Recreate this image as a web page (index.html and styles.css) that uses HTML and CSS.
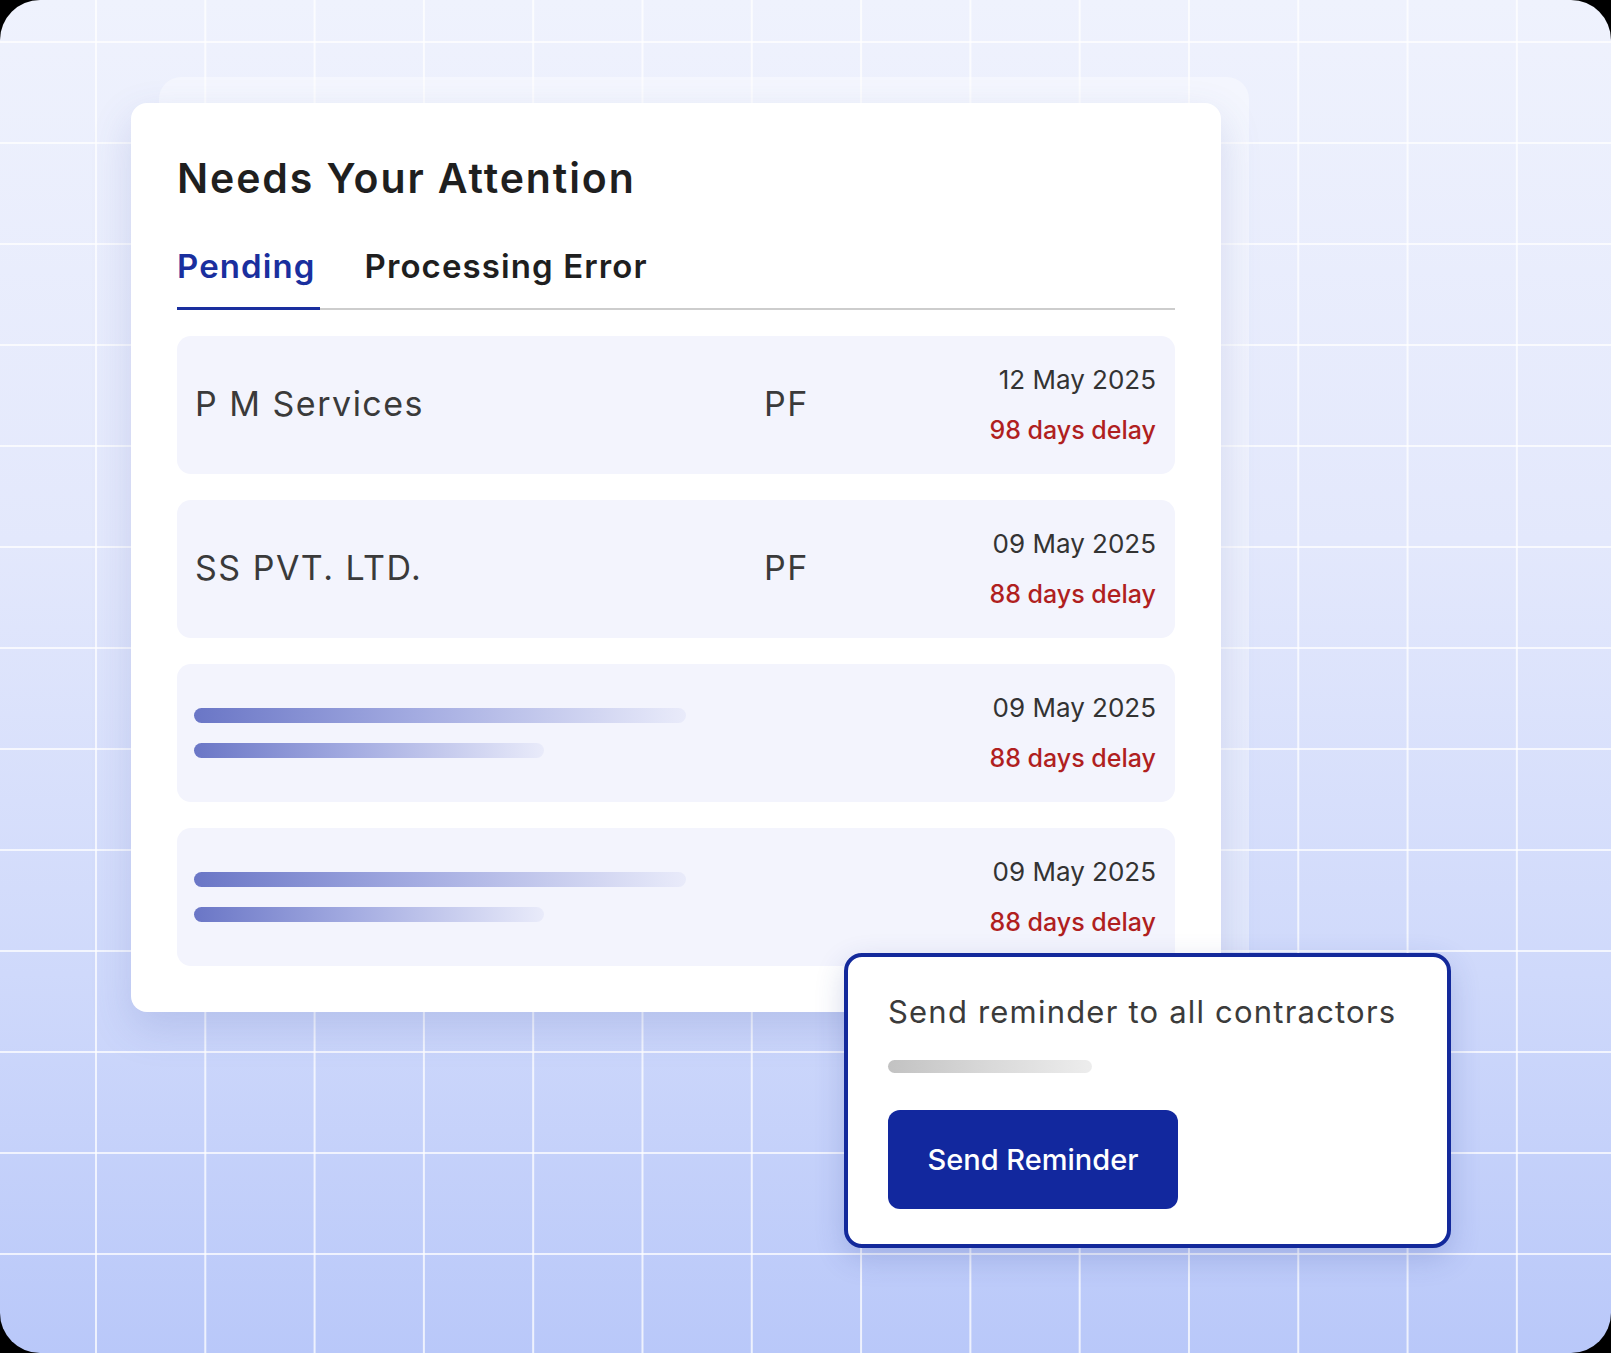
FILE: index.html
```html
<!DOCTYPE html>
<html lang="en">
<head>
    <meta charset="UTF-8">
    <meta name="viewport" content="width=device-width, initial-scale=1.0">
    <title>Needs Your Attention</title>
    <link rel="stylesheet" href="styles.css">
</head>
<body>
    <div class="frame">
        <div class="back-card"></div>

        <div class="card">
            <h1 class="card-title">Needs Your Attention</h1>

            <div class="tabs">
                <button class="tab active">Pending</button>
                <button class="tab">Processing Error</button>
            </div>

            <div class="list">
                <div class="row">
                    <div class="name">P M Services</div>
                    <div class="type">PF</div>
                    <div class="when">
                        <div class="date">12 May 2025</div>
                        <div class="delay">98 days delay</div>
                    </div>
                </div>

                <div class="row">
                    <div class="name">SS PVT. LTD.</div>
                    <div class="type">PF</div>
                    <div class="when">
                        <div class="date">09 May 2025</div>
                        <div class="delay">88 days delay</div>
                    </div>
                </div>

                <div class="row">
                    <div class="skeleton">
                        <div class="bar bar-long"></div>
                        <div class="bar bar-short"></div>
                    </div>
                    <div class="type"></div>
                    <div class="when">
                        <div class="date">09 May 2025</div>
                        <div class="delay">88 days delay</div>
                    </div>
                </div>

                <div class="row">
                    <div class="skeleton">
                        <div class="bar bar-long"></div>
                        <div class="bar bar-short"></div>
                    </div>
                    <div class="type"></div>
                    <div class="when">
                        <div class="date">09 May 2025</div>
                        <div class="delay">88 days delay</div>
                    </div>
                </div>
            </div>
        </div>

        <div class="reminder">
            <p class="reminder-text">Send reminder to all contractors</p>
            <div class="reminder-bar"></div>
            <button class="send-button">Send Reminder</button>
        </div>
    </div>
</body>
</html>
```

FILE: styles.css
```css
* {
    margin: 0;
    padding: 0;
    box-sizing: border-box;
}

body {
    font-family: Inter, "Noto Sans", Arial, sans-serif;
    background-color: #000;
    overflow: hidden;
}

.frame {
    position: relative;
    width: 1611px;
    height: 1353px;
    border-radius: 40px;
    overflow: hidden;
    padding: 103px 0 0 131px;
    background-color: #dfe5fb;
    background-image:
        linear-gradient(rgba(255, 255, 255, 0.75) 2px, transparent 2px),
        linear-gradient(90deg, rgba(255, 255, 255, 0.75) 2px, transparent 2px),
        linear-gradient(180deg, #eff2fd 0%, #e3e8fc 40%, #cfd9fb 72%, #b9c8f9 100%);
    background-size: 109.3px 101px, 109.3px 101px, 100% 100%;
    background-position: 0 41px, 95px 0, 0 0;
}

.back-card {
    position: absolute;
    left: 159px;
    top: 77px;
    width: 1090px;
    height: 934px;
    border-radius: 22px;
    background-color: rgba(255, 255, 255, 0.38);
}

.card {
    position: relative;
    z-index: 1;
    width: 1090px;
    padding: 51px 46px 46px;
    background-color: #fff;
    border-radius: 16px;
    box-shadow: 0 16px 40px rgba(70, 90, 170, 0.18);
}

.card-title {
    font-size: 41px;
    font-weight: 600;
    line-height: 1.2;
    color: #1f1f1f;
    letter-spacing: 1.9px;
}

.tabs {
    display: flex;
    gap: 45px;
    margin-top: 44px;
    border-bottom: 2px solid #cdcdcd;
}

.tab {
    font-family: inherit;
    font-size: 33px;
    font-weight: 600;
    line-height: 1.2;
    letter-spacing: 1.1px;
    color: #1f1f1f;
    background: none;
    border: none;
    border-bottom: 3px solid transparent;
    margin-bottom: -2px;
    padding: 0 4px 20px 0;
    cursor: pointer;
}

.tab.active {
    color: #1a2f9e;
    border-bottom-color: #1a2f9e;
}

.list {
    display: flex;
    flex-direction: column;
    gap: 26px;
    margin-top: 26px;
}

.row {
    display: grid;
    grid-template-columns: 569px 1fr auto;
    align-items: center;
    height: 138px;
    padding: 0 19px 0 18px;
    background-color: #f3f4fd;
    border-radius: 14px;
}

.name,
.type {
    font-size: 34px;
    color: #3a3a3a;
    line-height: 1.2;
    letter-spacing: 1.5px;
}

.when {
    text-align: right;
}

.date {
    font-size: 26px;
    line-height: 50px;
    color: #333;
}

.delay {
    font-size: 25px;
    font-weight: 500;
    line-height: 50px;
    color: #b01f1f;
}

.skeleton {
    display: flex;
    flex-direction: column;
    gap: 20px;
    margin-left: -1px;
}

.bar {
    height: 15px;
    border-radius: 8px;
    background: linear-gradient(90deg, #6a76c6 0%, #a3abe1 45%, #e9ebfa 100%);
}

.bar-long {
    width: 492px;
}

.bar-short {
    width: 350px;
}

.reminder {
    position: absolute;
    z-index: 2;
    left: 844px;
    top: 953px;
    width: 607px;
    height: 295px;
    padding: 36px 40px;
    background-color: #fff;
    border: 4px solid #13299b;
    border-radius: 18px;
    box-shadow: 0 10px 30px rgba(40, 60, 150, 0.2);
}

.reminder-text {
    font-size: 31px;
    line-height: 1.2;
    letter-spacing: 1.2px;
    color: #3b3b3b;
}

.reminder-bar {
    width: 204px;
    height: 13px;
    margin-top: 30px;
    border-radius: 7px;
    background: linear-gradient(90deg, #c2c2c2 0%, #d9d9d9 50%, #ededed 100%);
}

.send-button {
    display: block;
    width: 290px;
    height: 99px;
    margin-top: 37px;
    font-family: inherit;
    font-size: 29px;
    font-weight: 500;
    color: #fff;
    background-color: #12289e;
    border: none;
    border-radius: 12px;
    cursor: pointer;
}
```
